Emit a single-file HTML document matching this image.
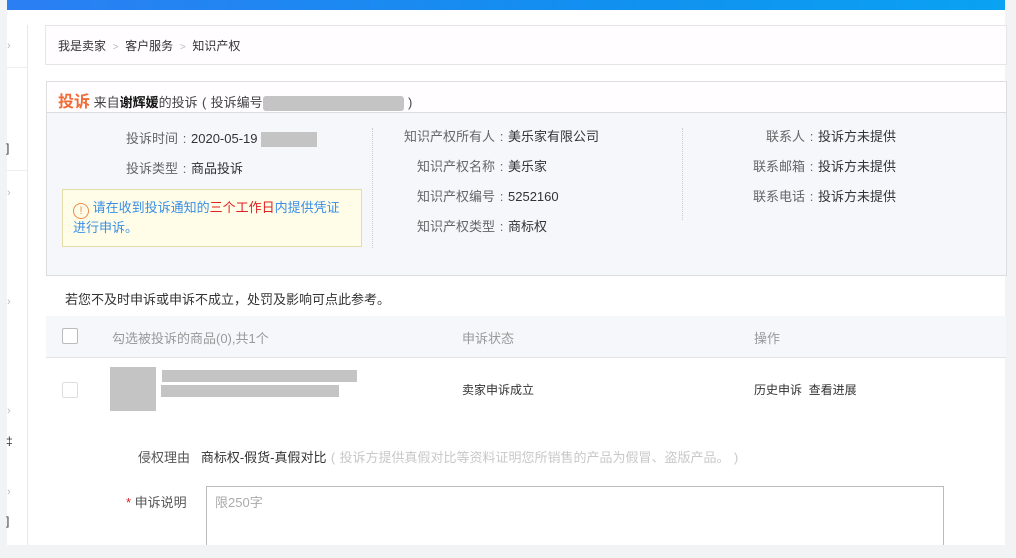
<!DOCTYPE html>
<html><head><meta charset="utf-8"><style>
*{margin:0;padding:0;box-sizing:border-box}
body{width:1016px;height:558px;overflow:hidden;background:#f2f3f5;font-family:"Liberation Sans","Noto Sans CJK SC",sans-serif;color:#333;position:relative}
.a{position:absolute;white-space:nowrap}
.g{background:#c4c4c4}
.c{display:inline-block;width:13px;text-align:center}
</style></head><body>
<div class="a" style="left:7px;top:0;width:998px;height:10px;background:linear-gradient(90deg,#2b7ff2,#1190f0 60%,#0aa2f2)"></div>
<div class="a" style="left:7px;top:10px;width:998px;height:535px;background:#fff"></div>
<div class="a" style="left:0;top:0;width:7px;height:558px;background:#f2f3f5"></div>
<div class="a" style="left:27px;top:25px;width:1px;height:520px;background:#e8e8e8"></div>
<div class="a" style="left:7px;top:67px;width:20px;height:1px;background:#eee"></div>
<div class="a" style="left:7px;top:170px;width:20px;height:1px;background:#eee"></div>
<div class="a" style="left:7px;top:40px;font-size:11px;color:#bbb">›</div>
<div class="a" style="left:7px;top:187px;font-size:11px;color:#bbb">›</div>
<div class="a" style="left:7px;top:296px;font-size:11px;color:#bbb">›</div>
<div class="a" style="left:7px;top:405px;font-size:11px;color:#bbb">›</div>
<div class="a" style="left:7px;top:486px;font-size:11px;color:#bbb">›</div>
<div class="a" style="left:6px;top:141px;font-size:12px;color:#333">]</div>
<div class="a" style="left:6px;top:434px;font-size:12px;color:#333">‡</div>
<div class="a" style="left:6px;top:514px;font-size:12px;color:#333">]</div>
<div class="a" style="left:45px;top:25px;width:962px;height:40px;border:1px solid #e6e6e6;background:#fffdff"></div>
<div class="a" style="left:58px;top:37px;font-size:12px;color:#333">我是卖家 &nbsp;<span style="color:#bbb;font-size:10px">&gt;</span>&nbsp; 客户服务 &nbsp;<span style="color:#bbb;font-size:10px">&gt;</span>&nbsp; 知识产权</div>
<div class="a" style="left:46px;top:81px;width:961px;height:195px;border:1px solid #ddd;background:#f5f7fb"></div>
<div class="a" style="left:47px;top:82px;width:959px;height:31px;background:#fffdff;border-bottom:1px solid #ddd"></div>
<div class="a" style="left:58px;top:88px;font-size:13px;color:#444"><b style="color:#f26b35;font-size:16px">投诉</b> 来自<b style="color:#111">谢辉媛</b>的投诉<span class="c">(</span>投诉编号<span class="g" style="display:inline-block;width:141px;height:15px;vertical-align:middle;border-radius:3px"></span><span class="c">)</span></div>
<div class="a" style="left:126px;top:128px;font-size:13px;color:#333"><span style="color:#666">投诉时间<span class="c">:</span></span>2020-05-19 <span class="g" style="display:inline-block;width:56px;height:15px;vertical-align:middle"></span></div>
<div class="a" style="left:126px;top:158px;font-size:13px;color:#333"><span style="color:#666">投诉类型<span class="c">:</span></span>商品投诉</div>
<div class="a" style="left:62px;top:189px;width:300px;height:58px;border:1px solid #e2dca8;background:#fffde8;padding:9px 12px 0 10px;font-size:13px;line-height:18px;color:#3a8ee6;white-space:normal"><span style="display:inline-block;width:16px;height:16px;border:1px solid #f08a4b;border-radius:50%;color:#f08a4b;font-size:11px;text-align:center;line-height:14px;vertical-align:-2px">!</span> 请在收到投诉通知的<span style="color:#e02020">三个工作日</span>内提供凭证进行申诉。</div>
<div class="a" style="left:372px;top:128px;width:1px;height:120px;border-left:1px dotted #ccc"></div>
<div class="a" style="left:682px;top:128px;width:1px;height:92px;border-left:1px dotted #ccc"></div>
<div class="a" style="left:385px;top:122px;font-size:13px;line-height:30px;color:#666;text-align:right;width:123px">知识产权所有人<span class="c">:</span><br>知识产权名称<span class="c">:</span><br>知识产权编号<span class="c">:</span><br>知识产权类型<span class="c">:</span></div>
<div class="a" style="left:508px;top:122px;font-size:13px;line-height:30px;color:#333">美乐家有限公司<br>美乐家<br>5252160<br>商标权</div>
<div class="a" style="left:718px;top:122px;width:100px;font-size:13px;line-height:30px;color:#666;text-align:right">联系人<span class="c">:</span><br>联系邮箱<span class="c">:</span><br>联系电话<span class="c">:</span></div>
<div class="a" style="left:818px;top:122px;font-size:13px;line-height:30px;color:#333">投诉方未提供<br>投诉方未提供<br>投诉方未提供</div>
<div class="a" style="left:65px;top:289px;font-size:13px;color:#333">若您不及时申诉或申诉不成立，处罚及影响可点此参考。</div>
<div class="a" style="left:46px;top:316px;width:960px;height:42px;background:#f5f7fb;border-bottom:1px solid #e3e3e3"></div>
<div class="a" style="left:62px;top:328px;width:16px;height:16px;border:1px solid #bbb;border-radius:2px;background:#fff"></div>
<div class="a" style="left:112px;top:328px;font-size:13px;color:#999">勾选被投诉的商品(0),共1个</div>
<div class="a" style="left:462px;top:328px;font-size:13px;color:#999">申诉状态</div>
<div class="a" style="left:754px;top:328px;font-size:13px;color:#999">操作</div>
<div class="a" style="left:62px;top:382px;width:16px;height:16px;border:1px solid #ddd;border-radius:2px;background:#fff"></div>
<div class="a g" style="left:110px;top:367px;width:46px;height:44px"></div>
<div class="a g" style="left:162px;top:370px;width:195px;height:12px"></div>
<div class="a g" style="left:161px;top:385px;width:178px;height:12px"></div>
<div class="a" style="left:462px;top:381px;font-size:12px;color:#333">卖家申诉成立</div>
<div class="a" style="left:754px;top:381px;font-size:12px;color:#333">历史申诉 &nbsp;查看进展</div>
<div class="a" style="left:138px;top:447px;font-size:13px;color:#333"><span style="color:#555">侵权理由</span> &nbsp;&nbsp;商标权-假货-真假对比<span style="color:#c8c8c8"><span class="c">(</span>投诉方提供真假对比等资料证明您所销售的产品为假冒、盗版产品。<span class="c">)</span></span></div>
<div class="a" style="left:126px;top:492px;font-size:13px;color:#555"><span style="color:#e02020">*</span> 申诉说明</div>
<div class="a" style="left:206px;top:486px;width:738px;height:70px;border:1px solid #bbb;background:#fff;padding:5px 8px;font-size:13px;color:#aaa">限250字</div>
<div class="a" style="left:0;top:545px;width:1016px;height:13px;background:#f2f3f5"></div>
</body></html>
